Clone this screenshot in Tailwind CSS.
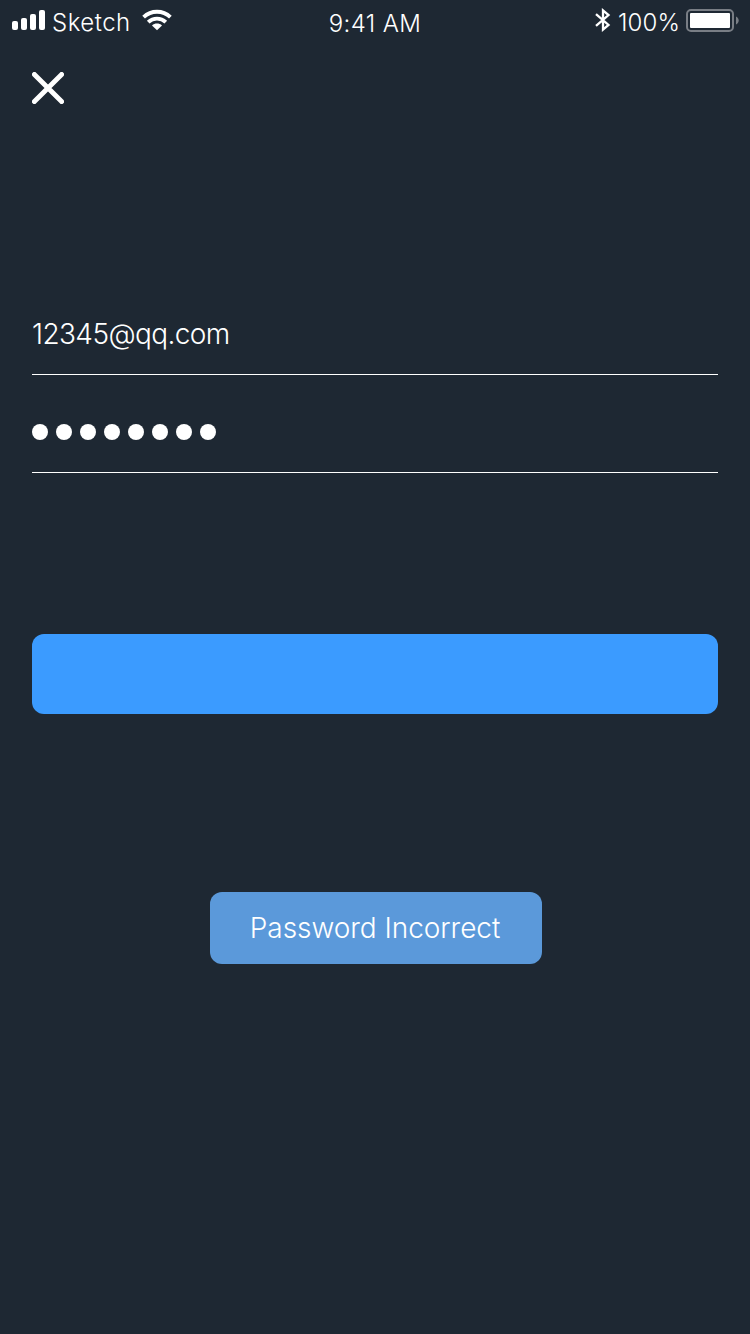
<!DOCTYPE html>
<html lang="en">
<head>
<meta charset="utf-8">
<title>Sign in</title>
<script src="https://cdn.jsdelivr.net/npm/@tailwindcss/browser@4"></script>
</head>
<body class="bg-[#1e2833] text-white font-['Inter','Liberation_Sans',sans-serif]">
<div class="w-[750px] h-[1334px] overflow-hidden flex flex-col">
  <header class="h-10 shrink-0 grid grid-cols-3 text-2xl leading-10 font-[350] whitespace-nowrap">
    <div class="flex pl-3 pt-[3px]">
      <svg class="w-[33px] h-5 mt-[7px] shrink-0" viewBox="0 0 33 20" fill="currentColor">
        <rect x="0" y="11" width="6" height="9" rx="2"/><rect x="9" y="8" width="6" height="12" rx="2"/><rect x="18" y="4" width="6" height="16" rx="2"/><rect x="27" y="0" width="6" height="20" rx="2"/>
      </svg>
      <span class="ml-[7px] w-[79px] tracking-[0.5px]">Sketch</span>
      <svg class="w-[30px] h-[22px] ml-[11px] mt-[6px] shrink-0" viewBox="0 0 30 22" fill="none" stroke="currentColor">
        <path d="M1.6 8.1C9.2 1 20.8 1 28.4 8.1" stroke-width="3.9"/>
        <path d="M6.2 13.1C11.3 8.5 18.7 8.5 23.8 13.1" stroke-width="3.9"/>
        <path d="M10 16.4C12.8 14 17.2 14 20 16.4L15 21.2Z" fill="currentColor" stroke="none"/>
      </svg>
    </div>
    <div class="text-center pt-1 tracking-[0.4px]">9:41 AM</div>
    <div class="flex justify-end pr-[11px] pt-[3px]">
      <svg class="w-4 h-6 mt-[5px] mr-[7px] shrink-0" viewBox="0 0 16 24" fill="none" stroke="currentColor" stroke-width="2.3" stroke-linejoin="miter">
        <path d="M1 6.2L13.5 17L8 21.6V2.4L13.5 7L1 17.8"/>
      </svg>
      <span class="tracking-[0.1px]">100%</span>
      <svg class="w-[53px] h-[23px] mt-[6px] ml-[6px] shrink-0" viewBox="0 0 53 23">
        <rect x="1" y="1" width="46" height="21" rx="4" fill="none" stroke="#797e85" stroke-width="2"/>
        <rect x="4" y="4" width="40" height="15" rx="1" fill="#fff"/>
        <path d="M50 7.5C53.6 9 53.6 14 50 15.5Z" fill="#797e85"/>
      </svg>
    </div>
  </header>
  <button class="ml-8 mt-8 size-8 shrink-0" aria-label="Close">
    <svg class="size-8" viewBox="0 0 32 32" fill="none" stroke="currentColor" stroke-width="4.9" stroke-linecap="round"><path d="M2.4 2.4L29.6 29.6M29.6 2.4L2.4 29.6"/></svg>
  </button>
  <main class="flex flex-col px-8 pt-[210px]">
    <div class="h-[61px] border-b border-white text-[28px] leading-10 font-[320] whitespace-nowrap tracking-[-0.6px]">12345@qq.com</div>
    <div class="h-[98px] border-b border-white pt-[49px] flex gap-2">
      <i class="size-4 rounded-full bg-white"></i><i class="size-4 rounded-full bg-white"></i><i class="size-4 rounded-full bg-white"></i><i class="size-4 rounded-full bg-white"></i><i class="size-4 rounded-full bg-white"></i><i class="size-4 rounded-full bg-white"></i><i class="size-4 rounded-full bg-white"></i><i class="size-4 rounded-full bg-white"></i>
    </div>
    <button class="mt-[161px] h-20 w-[686px] rounded-xl bg-[#3b9bff]" aria-label="Sign in"></button>
    <div class="mt-[178px] ml-[178px] w-[332px] h-[72px] rounded-xl bg-[#5b99da] pr-0.5 text-center text-[28px] leading-[72px] font-light whitespace-nowrap tracking-[-0.05px]">Password Incorrect</div>
  </main>
</div>
</body>
</html>
